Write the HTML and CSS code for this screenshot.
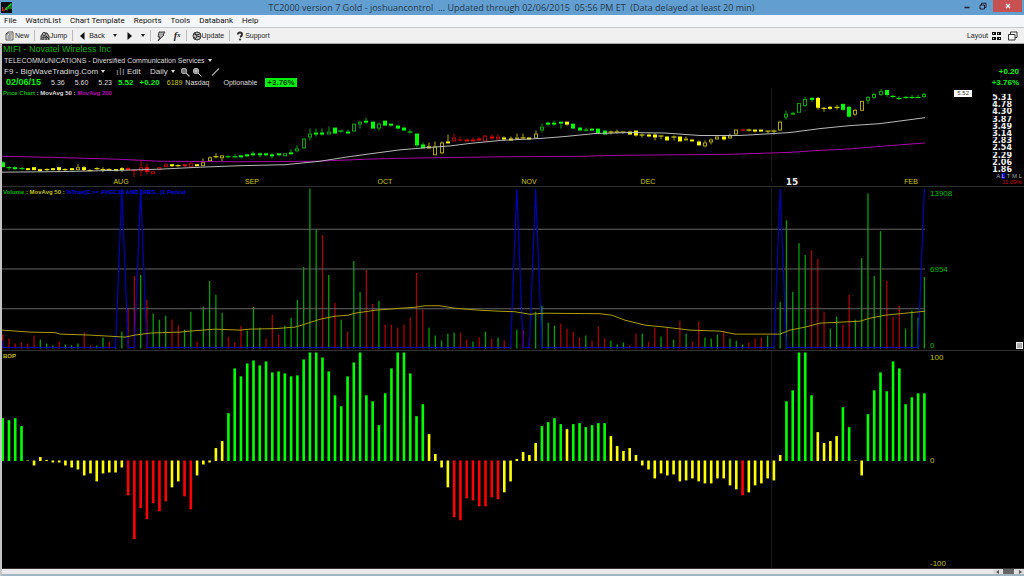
FILE: index.html
```html
<!DOCTYPE html>
<html lang="en">
<head>
<meta charset="utf-8">
<title>TC2000 version 7 Gold</title>
<link rel="stylesheet" href="styles.css">
</head>
<body>
<header class="titlebar">
  <svg class="app-icon" viewBox="0 0 11 11"><rect width="11" height="11" fill="#080808"/><path d="M1.5 5v4M3 7v2.500M4.500 6v2" stroke="#d22" stroke-width="1.200"/><path d="M5 8V6l2-1 3-3v5M6 5v3M8 3v4" stroke="#2b2" stroke-width="1.200" fill="none"/></svg>
  <h1 class="title">TC2000 version 7 Gold - joshuancontrol&nbsp; ... Updated through 02/06/2015&nbsp; 05:56 PM ET&nbsp; (Data delayed at least 20 min)</h1>
  <div class="window-buttons">
    <button class="win" aria-label="Minimize"><svg viewBox="0 0 8 8"><path d="M1.500 5.500h5" stroke="#223" stroke-width="1.500"/></svg></button>
    <button class="win" aria-label="Restore"><svg viewBox="0 0 8 8"><path d="M1 3h4.500v4H1zM2.500 3V1.200H7V5.500H5.500" fill="none" stroke="#223"/></svg></button>
    <button class="win close" aria-label="Close"><svg viewBox="0 0 8 8"><path d="M2 2l4 4M6 2L2 6" stroke="#fff" stroke-width="1.300"/></svg></button>
  </div>
</header>
<nav class="menubar">
  <button>File</button><button>WatchList</button><button>Chart Template</button><button>Reports</button><button>Tools</button><button>Databank</button><button>Help</button>
</nav>
<div class="toolbar">
  <button><svg class="ico" viewBox="0 0 10 10"><path d="M3 1h5v8H1V3zM3 1v2H1M2.500 5h4M2.500 7h4M4 3h3" fill="none" stroke="#555"/></svg>New</button>
  <span class="sep"></span>
  <button><svg class="ico" viewBox="0 0 10 10"><path d="M1 9V5l2-3h4l2 3v4M3 9V6h3v3" fill="#999" stroke="#333"/><circle cx="4" cy="3" r="1.500" fill="#ddd" stroke="#333"/><path d="M6 5l3 3" stroke="#222"/></svg>Jump</button>
  <span class="sep"></span>
  <button class="back"><svg class="arrow" viewBox="0 0 5 8"><path d="M4.500 0v8L0 4z"/></svg>Back<i class="drop"></i></button>
  <button class="forward" aria-label="Forward"><svg class="arrow" viewBox="0 0 5 8"><path d="M.500 0v8L5 4z"/></svg><i class="drop"></i></button>
  <span class="sep"></span>
  <button aria-label="Quick chart"><svg class="ico" viewBox="0 0 10 10"><path d="M3 1h6L7 4h1L2 10l2-4H2z" fill="#aaa" stroke="#222" stroke-width=".8"/></svg></button>
  <button class="fx" aria-label="Formula"><i>f</i><small>x</small></button>
  <span class="sep"></span>
  <button><svg class="ico" viewBox="0 0 10 10"><circle cx="5" cy="5" r="4" fill="#bbb" stroke="#333"/><path d="M2 3l3 1 3-1M4 7l1-2 3 1M2 6l2 2M5 5L3 2" stroke="#333" fill="none"/></svg>Update</button>
  <span class="sep"></span>
  <button><svg class="ico" viewBox="0 0 10 10"><path d="M3 3.500Q3 1.500 5 1.500T7 3.500Q7 5 5 6" fill="none" stroke="#333" stroke-width="2"/><circle cx="5" cy="8.500" r="1.100" fill="#333"/></svg>Support</button>
  <button class="layout">Layout<svg class="ico" viewBox="0 0 10 10"><path d="M0 1h4v3H0zM5 1h4v3H5zM0 6h4v3H0zM5 6h4v3H5z" fill="#111"/><path d="M1 3l1-1M6 3l1-1M1 8l1-1M7 8l1-1" stroke="#ddd"/></svg></button>
  <button aria-label="Cascade windows"><svg class="ico" viewBox="0 0 10 10"><path d="M.500 3.500h6.500v5.500H.500zM2.500 3.500V1H9v5.500H7" fill="#fff" stroke="#333"/></svg></button>
</div>
<main class="workspace">
  <section class="quote">
    <h2 class="symbol">MIFI - Novatel Wireless Inc</h2>
    <div class="row"><button class="industry">TELECOMMUNICATIONS - Diversified Communication Services<i class="drop"></i></button></div>
    <div class="row controls">
      <button class="list">F9 - BigWaveTrading.Com<i class="drop"></i></button>
      <button class="edit"><svg class="bars" viewBox="0 0 9 7"><path d="M1.500 2v5M4.500 0v7M7.500 1v6" stroke="#666" stroke-width="1.500"/></svg>Edit</button>
      <button class="period">Daily<i class="drop"></i></button>
      <span class="tools">
        <button aria-label="Zoom out"><svg class="ico" viewBox="0 0 10 10"><circle cx="4" cy="4" r="2.700" fill="#777" stroke="#aaa"/><path d="M6 6l3.500 3.500" stroke="#aaa" stroke-width="1.300"/></svg></button>
        <button aria-label="Zoom in"><svg class="ico" viewBox="0 0 10 10"><circle cx="4" cy="4" r="2.700" fill="#888" stroke="#bbb"/><path d="M6 6l3.500 3.500M4 2.500v3M2.500 4h3" stroke="#ccc"/></svg></button>
      </span>
      <button aria-label="Draw line"><svg class="ico" viewBox="0 0 10 10"><path d="M2 8.500L9 1.500" stroke="#aaa" stroke-width="1.300"/></svg></button>
      <strong class="change">+0.20</strong>
    </div>
    <div class="row prices">
      <strong class="date">02/06/15</strong><span>5.36</span><span>5.60</span><span>5.23</span><strong>5.52</strong><strong>+0.20</strong>
      <span class="volume">6189</span><span class="exchange">Nasdaq</span><span class="optionable">Optionable</span><strong class="badge">+3.76%</strong>
      <strong class="change">+3.76%</strong>
    </div>
  </section>
  <section class="pane">
    <div class="plot">
      <svg id="price" viewBox="2 88 926 99" preserveAspectRatio="none"></svg>
      <div class="legend"><span class="green">Price Chart</span> : MovAvg 50 : <span class="magenta">MovAvg 200</span></div>
      <div class="months" id="months"></div>
    </div>
    <div class="axis price-axis">
      <span class="last">5.52</span>
      <ol class="scale"><li>5.31</li><li>4.78</li><li>4.30</li><li>3.87</li><li>3.49</li><li>3.14</li><li>2.83</li><li>2.54</li><li>2.29</li><li>2.06</li><li>1.86</li></ol>
      <span class="modes">A <b>L</b> T M L</span>
      <span class="percent">11.09%</span>
    </div>
  </section>
  <section class="pane">
    <div class="plot">
      <svg id="volume" viewBox="2 187 926 164" preserveAspectRatio="none"></svg>
      <div class="legend yellow"><span class="green">Volume</span> : MovAvg 50 : <span class="blue">%True(C &gt;= AVGC10 AND (ABS...)1 Period</span></div>
    </div>
    <div class="axis volume-axis"><span>13908</span><span>6954</span><span>0</span><button class="grip" aria-label="Resize pane"></button></div>
  </section>
  <section class="pane">
    <div class="plot">
      <svg id="bop" viewBox="2 351 926 218" preserveAspectRatio="none"></svg>
      <div class="legend yellow">BOP</div>
    </div>
    <div class="axis bop-axis"><span>100</span><span>0</span><span>-100</span></div>
  </section>
  <footer class="scrollbar">
    <button aria-label="Scroll left"><svg viewBox="0 0 4 4"><path d="M3 0v4L0 2z"/></svg></button><span class="thumb"></span><button aria-label="Scroll right"><svg viewBox="0 0 4 4"><path d="M1 0v4l3-2z"/></svg></button>
  </footer>
</main>
<script src="charts.js"></script>
</body>
</html>
```
FILE: styles.css
```css
* { box-sizing: border-box; }
body {
  margin: 0;
  height: 100vh;
  display: flex;
  flex-direction: column;
  overflow: hidden;
  background: #000;
  color: #222;
  font: 8px/11px "Liberation Sans", Arial, sans-serif;
}
h1, h2, ol { margin: 0; padding: 0; font-weight: normal; list-style: none; }
button {
  border: 0;
  padding: 0;
  background: none;
  color: inherit;
  font: inherit;
  display: flex;
  align-items: center;
  white-space: nowrap;
}
svg { display: block; }
.ico { width: 10px; height: 10px; }

.titlebar { flex: none; display: flex; height: 15px; background: #629fd0; }
.app-icon { width: 11px; height: 11px; margin: 2px 0 0 1px; }
.title { flex: 1; padding-left: 52px; text-align: center; color: #26384c; font: 9px/15px "Open Sans", "Noto Sans", sans-serif; white-space: nowrap; }
.window-buttons { display: flex; align-items: flex-start; }
.win { width: 16px; height: 12px; justify-content: center; }
.win svg { width: 8px; height: 8px; }
.win.close { width: 29px; margin-left: 2px; margin-right: 2px; background: #c75050; }

.menubar { flex: none; display: flex; gap: 9px; height: 13px; padding-left: 4px; background: #f5f6f9; border-bottom: 1px solid #c8c8c8; color: #111; font: 8px/12px Roboto, "Noto Sans", sans-serif; }
.toolbar { flex: none; display: flex; align-items: center; height: 16px; padding: 0 6px 0 5px; background: #f0f0f0; border-bottom: 1px solid #aaa; color: #222; font-size: 7px; }
.sep { width: 1px; height: 11px; margin: 0 5px; background: #bbb; }
.drop { width: 0; height: 0; border: 2px solid transparent; border-top: 3px solid currentColor; border-bottom: 0; }
.arrow { width: 5px; height: 8px; fill: #111; }
.back { gap: 4px; margin-left: 2px; }
.back .drop { margin-left: 4px; }
.forward { gap: 9px; margin-left: 10px; }
.fx { margin-left: 8px; font: italic bold 10px/11px "Liberation Serif", serif; }
.fx small { font-size: 7px; }
.layout { gap: 4px; margin: 0 6px 0 auto; }

.workspace {
  flex: 1;
  min-height: 0;
  display: grid;
  grid-template-rows: auto 99fr 164fr 218fr 7px;
  border-left: 2px solid #c4c4c4;
  background: #000;
  color: #ddd;
}
.quote { padding-right: 5px; }
.symbol { padding-left: 1px; color: #00b000; font-size: 9px; line-height: 11px; }
.row { display: flex; height: 11px; align-items: center; padding-left: 2px; }
.row strong { color: #00f010; }
.industry { gap: 3px; font-size: 7px; }
.controls .list { gap: 3px; width: 112px; }
.edit { gap: 2px; width: 34px; }
.bars { width: 9px; height: 7px; }
.period { gap: 3px; width: 30px; }
.tools { display: flex; gap: 2px; margin-right: 8px; }
.change { margin-left: auto; }
.prices { gap: 10px; padding-left: 4px; }
.prices span { font-size: 7px; }
.prices .date { font-size: 9px; }
.prices strong:not(.date) { margin-left: -4px; }
.row .volume { margin-left: -3px; color: #c8c800; }
.exchange { margin-left: -7px; }
.optionable { margin-left: 4px; }
.row .badge { padding: 0 2px; line-height: 9px; background: #00f010; color: #003800; }
.prices strong.badge { margin-left: -2px; }
.prices strong.change { margin-left: auto; }

.pane { display: grid; grid-template-columns: 1fr 96px; min-height: 0; border-bottom: 1px solid #303030; }
.plot { position: relative; min-width: 0; min-height: 0; }
.plot > svg { position: absolute; width: 100%; height: 100%; }
.legend { position: absolute; top: 1px; left: 1px; font-size: 6px; line-height: 8px; font-weight: bold; white-space: nowrap; }
.green { color: #00b800; }
.magenta { color: #b800b8; }
.yellow { color: #c0c000; }
.blue { color: #0000e8; }
.months { position: absolute; left: 0; right: 0; bottom: 0; height: 8px; color: #c8c800; font-size: 7px; line-height: 8px; }
.months span { position: absolute; transform: translateX(-50%); }
.months .year { color: #eee; font: bold 9px/8px "DejaVu Sans", sans-serif; }

.axis { min-height: 0; font-size: 8px; line-height: 9px; }
.price-axis { display: grid; grid-template: 1fr 6px 7px / 44px 1fr; padding: 1px 2px 0 0; }
.last { justify-self: end; align-self: start; margin-top: 1px; padding: 0 3px; background: #fff; color: #333; font-size: 6px; line-height: 7px; }
.scale { display: flex; flex-direction: column; justify-content: space-between; padding: 5px 10px 0 0; text-align: right; color: #eee; font: bold 8px/7px "DejaVu Sans", sans-serif; }
.scale li { height: 7px; overflow: hidden; }
.modes, .percent { grid-column: 2; text-align: right; font-size: 6px; line-height: 6px; color: #aaa; white-space: nowrap; }
.modes b { background: #00c; color: #99f; }
.percent { color: #d00000; }
.volume-axis, .bop-axis { position: relative; display: flex; flex-direction: column; justify-content: space-between; padding: 2px 0 0 2px; }
.volume-axis { color: #00b800; }
.bop-axis { color: #c0c000; }
.grip { position: absolute; right: 1px; bottom: 1px; width: 7px; height: 7px; background: #aaa; border: 1px solid #eee; }
.scrollbar { display: flex; justify-content: flex-end; background: #ece9ec; border-bottom: 2px solid #9fb6c2; }
.scrollbar button { width: 9px; justify-content: center; background: #ddd; }
.scrollbar svg { width: 4px; height: 4px; fill: #555; }
.thumb { width: 11px; margin: 0 1px; background: #666; }
```
FILE: charts.js
```js
const FIRST = 2.7, STEP = 6.27, PIVOT = 771;
const GREEN = '#00ff00', YELLOW = '#ffff00', RED = '#ff0000';
const at = i => FIRST + STEP * i;

function add(svg, tag, attrs) {
  const node = document.createElementNS('http://www.w3.org/2000/svg', tag);
  for (const key in attrs) node.setAttribute(key, attrs[key]);
  svg.appendChild(node);
}
function line(svg, points, color, width) {
  add(svg, 'polyline', { points, fill: 'none', stroke: color, 'stroke-width': width || 1 });
}
function bar(svg, x, y, w, h, fill) {
  add(svg, 'rect', { x: x - w / 2, y, width: w, height: h, fill });
}

/* Each candle: tone, body top, body bottom, wick top, wick bottom; lower-case tone is a hollow body. */
const candles = `G163,168,162,168 G168,169,167,171 G168,170,167,171 G169,170,168,171 Y169,171,169,171 Y168,171,168,171 Y170,172,170,172 Y170,171,169,172 Y169,171,169,171 Y168,171,168,173
Y170,171,169,172 Y169,171,169,171 y168,171,165,171 Y168,171,167,172 Y171,172,170,172 Y169,170,168,171 Y170,171,168,173 Y170,171,169,172 Y170,172,170,172 Y169,171,168,173
R169,171,168,172 R171,172,170,178 r168,172,161,177 R168,173,164,175 r172,175,172,175 r168,171,168,171 r165,168,164,168 Y165,167,165,168 Y166,167,165,168 R165,167,165,168
r164,168,162,168 Y165,167,165,167 y163,167,159,167 y158,162,157,162 Y157,158,154,159 y156,159,156,162 G157,158,156,159 G157,158,155,159 G156,158,156,159 G155,157,155,158
G154,156,152,157 G154,156,153,158 G154,156,154,157 G155,157,154,159 G154,156,154,157 g154,157,154,157 G153,155,150,155 g149,152,146,153 g139,149,139,149 g134,138,129,141
G133,135,129,137 G133,135,129,136 g132,135,127,135 G128,134,128,134 G131,132,130,133 G132,134,130,134 g124,132,124,132 g122,125,121,129 G121,123,118,124 G122,129,122,129
g124,129,123,131 G121,126,121,126 G124,126,124,127 G126,129,125,130 G128,131,127,131 G132,133,130,134 G134,146,134,148 G145,149,143,149 Y147,149,143,149 y147,156,142,156
y143,154,142,155 Y142,144,135,144 r138,142,134,142 R140,141,137,142 R140,142,139,142 R140,142,138,142 R139,141,138,142 r136,142,136,142 R137,139,135,140 r137,140,135,140
Y138,140,137,141 Y139,141,137,141 y138,140,134,140 Y138,139,134,139 Y138,140,138,140 y134,139,131,139 g127,131,124,133 G123,125,122,126 G123,125,121,126 G122,124,122,129
Y122,125,122,126 G124,129,124,129 G128,131,127,131 G130,131,128,132 G129,131,129,131 G129,134,129,134 G131,135,131,135 Y132,133,131,135 Y132,133,130,134 Y132,133,132,134
Y132,135,131,135 Y131,136,131,137 Y135,136,134,138 Y135,137,134,138 Y135,138,134,141 Y136,137,136,140 Y137,141,137,141 Y137,138,136,141 Y137,142,137,142 y139,141,137,141
Y140,142,140,142 Y142,146,141,146 y143,147,141,148 y140,143,139,145 y137,140,137,140 Y137,140,136,141 y136,139,134,139 y130,135,130,135 R130,131,129,132 Y130,131,129,132
Y130,132,130,133 Y130,132,130,132 Y131,132,131,134 Y131,132,130,135 y122,131,121,131 g114,118,111,120 g113,114,112,115 g103,113,103,113 g99,106,97,107 G98,100,97,102
Y98,108,97,110 Y108,109,107,112 Y107,109,106,110 Y107,108,105,110 G104,110,104,111 G107,117,106,118 y110,115,109,116 y101,111,101,111 g97,101,96,104 g94,98,93,99
g91,95,89,96 G90,95,90,97 G96,97,95,98 G98,99,96,100 G97,98,96,99 G97,98,95,99 G97,98,95,98 g94,97,93,98`.split(/\s+/);

const price = document.getElementById('price');
bar(price, PIVOT + .5, 88, 1, 95, '#1c1c1c');
const candleColor = {
  G: '#00ff00', Y: '#ffff00', R: '#ee0000',
  g: '#00a800', y: '#b0a800', r: '#b80000'
};
candles.forEach((text, i) => {
  const tone = text[0];
  const [top, bottom, high, low] = text.slice(1).split(',').map(Number);
  const x = Math.round(at(i));
  const dim = candleColor[tone.toLowerCase()];
  if (high < top) bar(price, x, high, 1, top - high, dim);
  if (low > bottom) bar(price, x, bottom, 1, low - bottom, dim);
  if (tone === tone.toLowerCase()) {
    add(price, 'rect', { x: x - 1.5, y: top + .5, width: 3, height: Math.max(1, bottom - top - 1), fill: 'none', stroke: dim });
  } else {
    bar(price, x, top, bottom - top > 1 ? 4 : 5, bottom - top, candleColor[tone]);
  }
});
line(price, '2,157 50,158 120,160 160,162 240,162.500 315,162 365,160 400,159 500,157.500 580,157 620,156 730,155 760,154 790,153 820,151 850,149.500 880,147 925,143.500', '#a800a8');
line(price, '2,173 60,172.500 125,171 160,170 200,168 240,166.500 285,165.500 320,162 345,158 370,154.500 400,150.500 430,148 450,146.500 470,144 500,141 540,139 565,137 595,134 630,133 665,133.500 700,136 740,136 765,134.500 790,133 820,129 850,126 880,124 925,118', '#b8b8b8');

const months = document.getElementById('months');
[['AUG', 121], ['SEP', 252], ['OCT', 385], ['NOV', 529], ['DEC', 648], ['15', 792], ['FEB', 911]].forEach(([name, x]) => {
  const label = document.createElement('span');
  label.textContent = name;
  if (name === '15') label.className = 'year';
  label.style.left = (x - 2) / 9.26 + '%';
  months.appendChild(label);
});

/* Volume: negative numbers are down days. */
const volumes = [-14,-10,-5,-6,-5,-13,9,5,3,-7,4,3,5,-16,-3,3,11,-7,2,17,-41,-73,74,-49,35,29,33,-29,-23,19,37,-7,42,68,54,36,-12,-6,-23,18,42,21,-10,-34,-14,23,31,49,82,161,120,-114,74,-46,29,-17,88,57,-79,-45,48,-24,-24,-21,-24,-31,-76,-39,21,13,8,15,16,-16,-9,7,-11,17,-10,11,-8,2,19,-19,-11,37,43,26,23,-25,-20,-17,-11,13,-8,-22,-10,8,4,6,-3,-15,15,-7,-21,12,-21,9,-28,15,-7,-27,11,10,14,-18,10,8,4,-6,-10,-11,13,2,47,129,57,106,94,-99,-90,-37,20,32,-24,-54,29,91,156,73,118,-68,-32,-43,20,38,31,72];
const volume = document.getElementById('volume');
bar(volume, PIVOT + .5, 188, 1, 162, '#1c1c1c');
volumes.forEach((v, i) => bar(volume, at(i), 349.5 - Math.abs(v), 1.3, Math.abs(v), v > 0 ? '#00a000' : '#a80000'));
[229.5, 269.5, 309.5].forEach(y => line(volume, `2,${y} 925,${y}`, '#666'));
let path = '2,341 3,348.500';
[19, 22, 82, 85, 124].forEach(i => {
  path += ` ${at(i - 1)},348.500 ${at(i)},189 ${at(i + 1)},348.500`;
});
line(volume, path + ` ${at(146)},348.500 ${at(147)},189`, '#0000b8', 1.2);
line(volume, '2,331 30,333 55,333.500 60,335 90,336 125,338 135,336 150,334 180,333 190,332 215,330 240,331 250,330 275,329.500 295,328 305,325 320,320 335,317 348,316 355,314 375,311 400,309 415,308 425,306.500 440,306.500 455,309 480,311 500,312 515,312.500 530,315 545,314 600,314.500 612,316 625,321 645,326 665,328 690,331 720,332 735,335 780,335 790,331 805,328 820,324 860,322 870,319 885,316 905,314 925,312', '#a8a000');

/* Balance of power */
const power = [43,41,43,35,0.5,-5,4,1,-2,-2,-5,-7,-9,-15,-13,-21,-13,-12,-12,-7,-35,-79,-48,-59,-43,-51,-41,-27,-21,-36,-49,-15,-4,-2,13,20,48,93,85,98,101,96,100,89,90,88,85,86,102,109,109,104,90,66,55,85,99,109,66,60,36,68,93,109,109,88,45,57,27,7,-7,-27,-57,-60,-38,-40,-46,-46,-37,-39,-32,-21,2,9,6,18,35,39,43,37,32,37,38,34,36,38,38,25,15,10,13,6,-5,-9,-18,-13,-15,-14,-21,-20,-18,-21,-23,-23,-18,-18,-25,-29,-35,-32,-25,-23,-18,-20,6,60,71,109,109,66,29,18,20,25,54,34,0.5,-15,47,71,89,70,100,93,57,64,68,68];
const bop = document.getElementById('bop');
bar(bop, PIVOT + .5, 351, 1, 218, '#1c1c1c');
power.forEach((v, i) => {
  const color = v > 32 ? GREEN : v <= -35 ? RED : YELLOW;
  bar(bop, at(i), v > 0 ? 461.5 - v : 461, 2.6, Math.abs(v), color);
});
```
